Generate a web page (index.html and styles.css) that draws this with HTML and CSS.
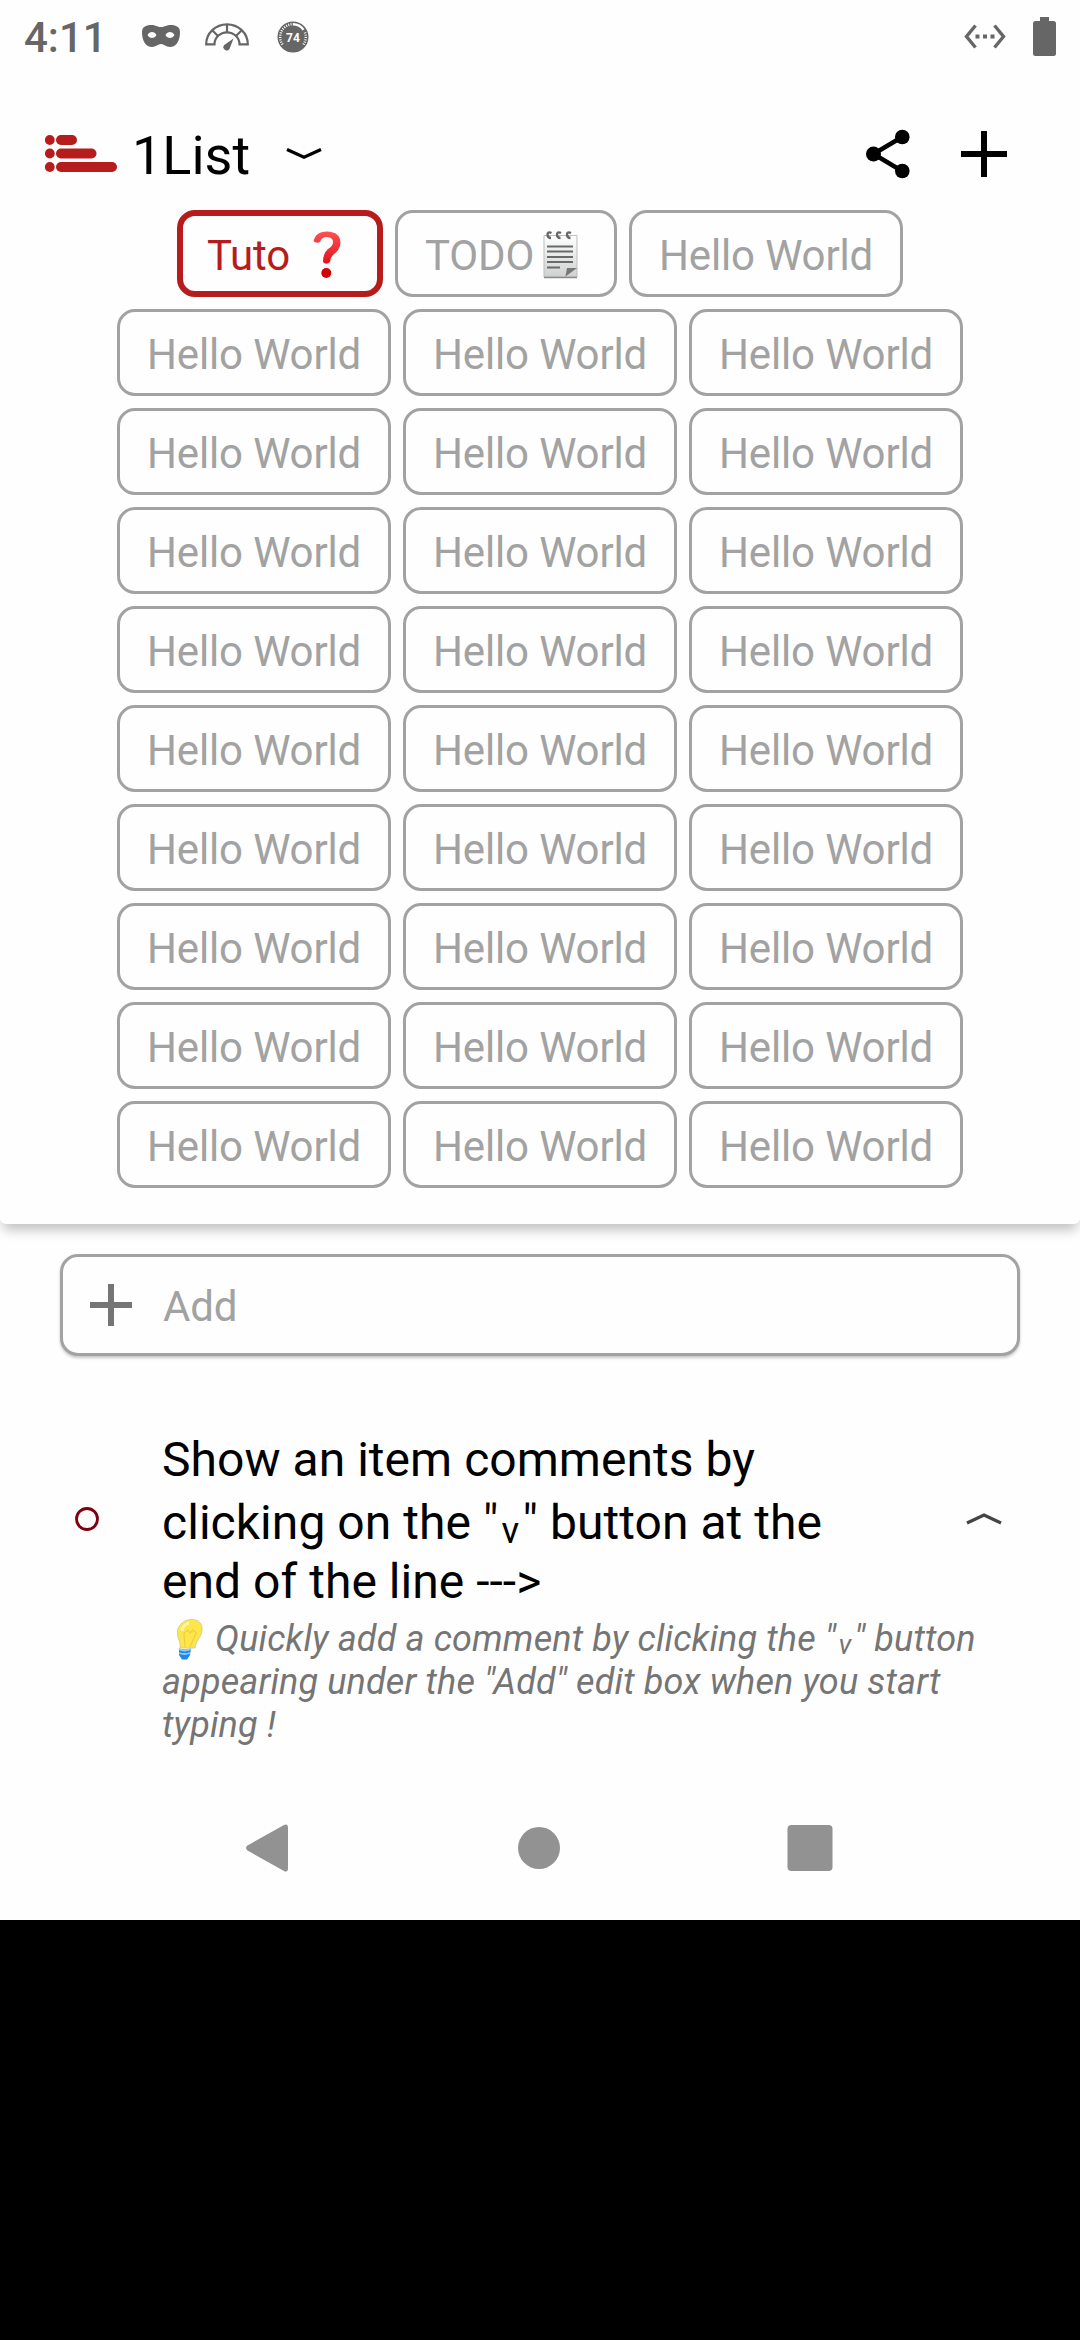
FILE: index.html
```html
<!DOCTYPE html>
<html lang="en">
<head>
<meta charset="utf-8">
<title>1List</title>
<link rel="stylesheet" href="styles.css">
</head>
<body>
<div class="screen">
  <div class="status">
    <span class="clock">4:11</span>
    <svg class="mask" width="38" height="22" viewBox="0 0 38 22"><path fill="#666" fill-rule="evenodd" d="M0 7C0 2 4 0 9 0c5 0 6 2 10 2s5-2 10-2c5 0 9 2 9 7 0 9-4 15-10 15-4 0-6-3-9-3s-5 3-9 3C4 22 0 16 0 7ZM5.500 10c2 4 7 4 9 0-2-4-7-4-9 0Zm18 0c2 4 7 4 9 0-2-4-7-4-9 0Z"/></svg>
    <svg class="gauge" width="44" height="28" viewBox="0 0 44 28"><g fill="none" stroke="#666" stroke-width="2.200"><path d="M1.200 21.300A20.800 20 0 0 1 42.800 21.300H34.500A12.500 12 0 0 0 9.500 21.300Z"/><path d="M22 1v9M7.500 7.500l6 6M36.500 7.500l-6 6"/></g><path fill="#666" d="M28.500 15.500 24.500 26a3.300 3.300 0 1 1-5.300-4Z"/></svg>
    <svg class="level" width="32" height="32" viewBox="0 0 32 32"><circle cx="16" cy="16" r="15.500" fill="#666"/><path d="M5.600 23.500A12.800 12.800 0 0 1 16 3.200M26.400 23.500a12.800 12.800 0 0 0 1.500-12" fill="none" stroke="#fff" stroke-width="2.400" stroke-dasharray="1 1.300"/><path d="M16 3.200a12.800 12.800 0 0 1 10.500 5.600" fill="none" stroke="#fff" stroke-width="2.400"/><text x="16" y="20.500" text-anchor="middle" class="level-text">74</text></svg>
    <span class="grow"></span>
    <svg class="net" width="42" height="26" viewBox="0 0 42 26"><path d="M11.500 1.500 2.500 12.500l9 11M30.500 1.500l9 11-9 11" fill="none" stroke="#666" stroke-width="3.400"/><path fill="#666" d="M11.500 10.500h4v4h-4zM19 10.500h4v4h-4zM26.500 10.500h4v4h-4z"/></svg>
    <svg width="23" height="39" viewBox="0 0 23 39"><path fill="#666" d="M7 0h9v4h4.500Q23 4 23 6.500v30Q23 39 20.500 39h-18Q0 39 0 36.500v-30Q0 4 2.500 4H7Z"/></svg>
  </div>

  <header class="panel">
    <div class="title-row">
      <svg width="72" height="38" viewBox="0 0 72 38" fill="#b71c1c"><circle cx="4.800" cy="5" r="4.900"/><circle cx="4.800" cy="18.500" r="4.900"/><circle cx="4.800" cy="32" r="4.900"/><rect x="11" width="21" height="10" rx="5"/><rect x="11" y="13.500" width="40.500" height="10" rx="5"/><rect x="11" y="27" width="61" height="10" rx="5"/></svg>
      <h1>1List</h1>
      <svg class="chevron" width="36" height="14" viewBox="0 0 36 14"><path d="M1 2.500 18 10.300 35 2.500" fill="none" stroke="#000" stroke-width="3.200"/></svg>
      <span class="grow"></span>
      <svg class="share" width="44" height="50" viewBox="0 0 44 50"><path d="M36 8 7.500 25 36 42" fill="none" stroke="#000" stroke-width="4.500"/><circle cx="7.500" cy="25" r="7.500"/><circle cx="36.300" cy="8" r="7.300"/><circle cx="36.300" cy="42" r="7.300"/></svg>
      <svg width="46" height="46" viewBox="0 0 46 46"><path d="M20 0h6v20h20v6H26v20h-6V26H0v-6h20Z"/></svg>
    </div>
    <nav class="chips">
      <div class="chip-row">
        <div class="chip active">Tuto <svg class="question" width="28" height="48" viewBox="0 0 28 48"><defs><linearGradient id="red" x2="0" y2="1"><stop stop-color="#ff5252"/><stop offset="1" stop-color="#e0141c"/></linearGradient></defs><path d="M.500 11Q2 .500 14 .500 27.500 1 27.500 12 27 19 20 24q-3 3-3 7-4 3.500-7 0 0-9 5-13 5-3 5-7 0-4.500-6-5-5.500 0-7 5-4 2-6.500-1Z" fill="url(#red)"/><circle cx="13.300" cy="42" r="5" fill="#d50000"/></svg></div>
        <div class="chip todo">TODO<svg class="note" width="36" height="48" viewBox="0 0 36 48"><defs><linearGradient id="paper" x2="0" y2="1"><stop stop-color="#fff"/><stop offset="1" stop-color="#cfd1d1"/></linearGradient></defs><path d="M1 4.500h33V46H1Z" fill="url(#paper)" stroke="#bdbfbf"/><path d="M1 46.500h33" stroke="#8b8d8d" stroke-width="1.500"/><path d="M34 37H24l-1.500 8.500Z" fill="#777"/><path d="M4 15.500h26M4 20.500h26M4 26h26M4 31h26M4 36.500h13" stroke="#666b69" stroke-width="2"/><path d="M8.500 2q-4-2-4 2 .500 3 3.500 3M18 2q-4-2-4 2 .500 3 3.500 3M28 2q-4-2-4 2 .500 3 3.500 3" fill="none" stroke="#666" stroke-width="2.400"/></svg></div>
        <div class="chip">Hello World</div>
      </div>
      <div class="chip-row"><div class="chip">Hello World</div><div class="chip">Hello World</div><div class="chip">Hello World</div></div>
      <div class="chip-row"><div class="chip">Hello World</div><div class="chip">Hello World</div><div class="chip">Hello World</div></div>
      <div class="chip-row"><div class="chip">Hello World</div><div class="chip">Hello World</div><div class="chip">Hello World</div></div>
      <div class="chip-row"><div class="chip">Hello World</div><div class="chip">Hello World</div><div class="chip">Hello World</div></div>
      <div class="chip-row"><div class="chip">Hello World</div><div class="chip">Hello World</div><div class="chip">Hello World</div></div>
      <div class="chip-row"><div class="chip">Hello World</div><div class="chip">Hello World</div><div class="chip">Hello World</div></div>
      <div class="chip-row"><div class="chip">Hello World</div><div class="chip">Hello World</div><div class="chip">Hello World</div></div>
      <div class="chip-row"><div class="chip">Hello World</div><div class="chip">Hello World</div><div class="chip">Hello World</div></div>
      <div class="chip-row"><div class="chip">Hello World</div><div class="chip">Hello World</div><div class="chip">Hello World</div></div>
    </nav>
  </header>

  <div class="add-box">
    <svg width="42" height="42" viewBox="0 0 42 42"><path fill="#757575" d="M18 0h6v18h18v6H24v18h-6V24H0v-6h18Z"/></svg>
    <span>Add</span>
  </div>

  <article class="item">
    <div class="item-main">
      <svg width="24" height="24" viewBox="0 0 24 24"><circle cx="12" cy="12" r="10.500" fill="none" stroke="#80000f" stroke-width="2.800"/></svg>
      <div class="item-text">
        <div class="line one">Show an item comments by</div>
        <div class="line two">clicking on the "<span class="vee">v</span>" button at the</div>
        <div class="line three">end of the line ---&gt;</div>
      </div>
      <svg class="up" width="36" height="14" viewBox="0 0 36 14"><path d="M1 11 18 3 35 11" fill="none" stroke="#444" stroke-width="3.200"/></svg>
    </div>
    <div class="comment">
      <div class="cline first"><svg class="bulb" width="26" height="41" viewBox="0 0 26 41"><path d="M15 .500C22 .500 26 5 25 12c-1 7-6 9-7 17H3C4 21-.500 19 .500 12 1.500 5 8 .500 15 .500Z" fill="#fde64b" stroke="#d9cf8b"/><path d="M5 12q1-6 7-8" stroke="#fff59d" stroke-width="3" fill="none"/><path d="M8 28 7 14l4-3 2 3 3-3 3 3-6 14" fill="none" stroke="#f2cd3c" stroke-width="1.200"/><path d="M2 29.500q5 2 12 0l-1 6.500-3 4.500H5L2 36Z" fill="#1e88e5"/><path d="M2 30q5 3 12 0M2 34q5 2 11 0" stroke="#90caf9" stroke-width="1.800" fill="none"/></svg><span class="quick">Quickly add a comment by clicking the "<span class="vee">v</span>" button</span></div>
      <div class="cline">appearing under the "Add" edit box when you start</div>
      <div class="cline">typing !</div>
    </div>
  </article>

  <div class="navbar">
    <svg width="48" height="48" viewBox="0 0 48 48"><path fill="#929292" d="M4.500 21.500 41 1q4-2 4 3v40q0 5-4 3L4.500 26.500q-3-2.500 0-5Z"/></svg>
    <svg width="48" height="48" viewBox="0 0 48 48"><circle cx="24" cy="24" r="21" fill="#929292"/></svg>
    <svg width="48" height="48" viewBox="0 0 48 48"><rect x="1.500" y="1" width="45" height="46" rx="4" fill="#929292"/></svg>
  </div>
</div>
</body>
</html>
```
FILE: styles.css
```css
* { box-sizing: border-box; }
body {
  margin: 0;
  background: #000;
  font-family: Roboto, "Liberation Sans", sans-serif;
}
svg { display: block; flex: none; }
.screen {
  width: 1080px;
  height: 1920px;
  background: #fefefe;
  display: flex;
  flex-direction: column;
  overflow: hidden;
}
.grow { flex: 1; }

.status {
  height: 72px;
  flex: none;
  display: flex;
  align-items: center;
  padding: 0 24px;
  color: #666;
}
.clock {
  width: 118px;
  font-size: 42px;
  font-weight: 500;
  line-height: 50px;
  padding-top: 3px;
}
.gauge { margin: 2px 28px 0 25px; }
.level { margin-top: 1px; }
.level-text { font: 700 12px Roboto, sans-serif; fill: #fff; }
.net { margin-right: 27px; margin-top: 1px; }

.panel {
  height: 1152px;
  flex: none;
  background: #fefefe;
  border-radius: 6px;
  box-shadow: 0 9px 12px -3px rgba(0, 0, 0, .24);
}
.title-row {
  height: 138px;
  display: flex;
  align-items: center;
  padding: 25px 73px 0 45px;
}
h1 {
  margin: 0 0 0 15px;
  width: 154px;
  font-size: 54px;
  font-weight: 400;
  line-height: 64px;
  padding-top: 4px;
}
.share { margin-right: 51px; }
.chips { display: flex; flex-direction: column; gap: 12px; }
.chip-row { display: flex; justify-content: center; gap: 12px; }
.chip {
  width: 274px;
  height: 87px;
  border: 3px solid #a2a2a2;
  border-radius: 18px;
  display: flex;
  align-items: center;
  padding: 5px 0 0 27px;
  font-size: 42px;
  line-height: 50px;
  letter-spacing: -.15px;
  color: #a2a2a2;
  white-space: nowrap;
}
.chip.active {
  width: 206px;
  padding-left: 24px;
  border: 6px solid #b71c1c;
  color: #b71c1c;
}
.chip.todo { width: 222px; }
.question { margin: 0 0 3px 23px; }
.note { margin: 0 0 3px 9px; }

.add-box {
  flex: none;
  width: 960px;
  height: 102px;
  margin: 30px 60px 0;
  border: 3px solid #a2a2a2;
  border-radius: 18px;
  background: #fefefe;
  box-shadow: 0 2px 3px rgba(0, 0, 0, .22);
  display: flex;
  align-items: center;
  gap: 31px;
  padding-left: 27px;
  color: #a2a2a2;
  font-size: 42px;
  line-height: 50px;
}
.add-box span { padding-top: 3px; letter-spacing: -.15px; }

.item { flex: none; height: 420px; padding-top: 73px; }
.item-main { display: flex; align-items: center; padding: 0 0 0 75px; height: 180px; }
.item-text {
  width: 867px;
  flex: none;
  padding: 4px 0 0 63px;
  font-size: 48px;
  letter-spacing: .04px;
  white-space: nowrap;
  color: #000;
}
.line { height: 60px; line-height: 60px; }
.line.two { height: 62px; line-height: 66px; }
.vee {
  font-size: .76em;
  line-height: 0;
  margin: 0 .09em;
  vertical-align: -.1em;
}
.comment { padding: 9px 0 0 162px; font-size: 36px; letter-spacing: .14px; font-style: italic; color: #757575; white-space: nowrap; }
.cline { height: 43px; line-height: 43px; }
.first { display: flex; }
.bulb { margin: 1px 12px 0 15px; }

.navbar {
  flex: none;
  height: 144px;
  display: flex;
  align-items: center;
  justify-content: space-between;
  padding: 0 246px 0 243px;
}
```
